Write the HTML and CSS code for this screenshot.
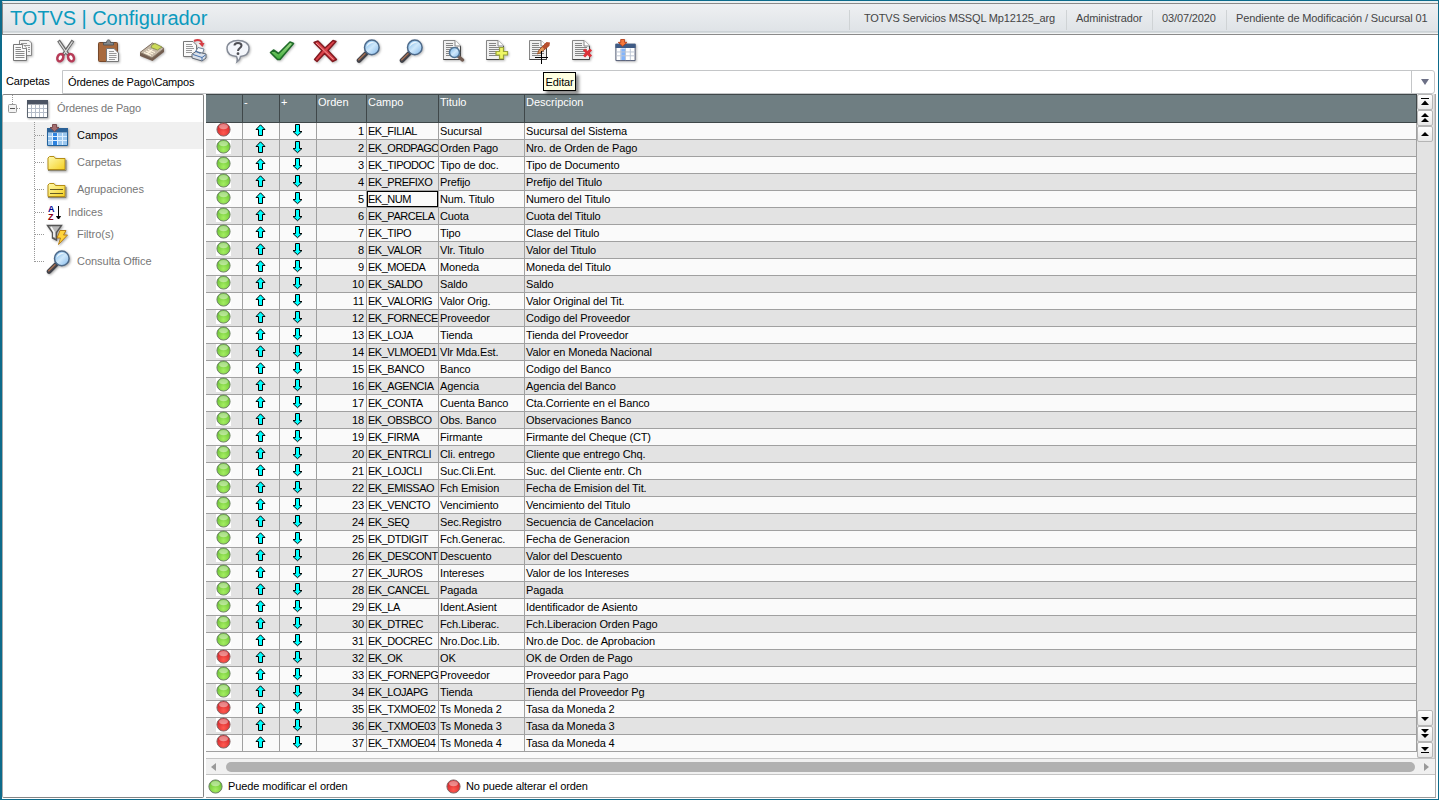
FILE: index.html
```html
<!DOCTYPE html>
<html lang="es">
<head>
<meta charset="utf-8">
<title>TOTVS | Configurador</title>
<link rel="stylesheet" href="styles.css">
</head>
<body>
<svg class="defs" width="0" height="0">
  <defs>
    <linearGradient id="lens" x1="0" y1="0" x2="1" y2="1"><stop offset="0" stop-color="#6fb0e6"/><stop offset=".5" stop-color="#cfe8fb"/><stop offset="1" stop-color="#7fb6ea"/></linearGradient>
    <linearGradient id="fold" x1="0" y1="0" x2="1" y2="1"><stop offset="0" stop-color="#fffbb0"/><stop offset="1" stop-color="#f4cf20"/></linearGradient>
    <radialGradient id="gr" cx=".5" cy=".75" r=".7"><stop offset="0" stop-color="#a5ee62"/><stop offset="1" stop-color="#66c02e"/></radialGradient>
    <radialGradient id="rd" cx=".5" cy=".75" r=".7"><stop offset="0" stop-color="#ff5a50"/><stop offset="1" stop-color="#cf2026"/></radialGradient>
    <linearGradient id="chk" x1="0" y1="0" x2="0" y2="1"><stop offset="0" stop-color="#a5dc8c"/><stop offset="1" stop-color="#3fae3c"/></linearGradient>
    <symbol id="green" viewBox="0 0 15 15"><circle cx="7.5" cy="7.5" r="6.600" fill="url(#gr)" stroke="#6f806a"/><ellipse cx="7.5" cy="4.600" rx="4.400" ry="2.600" fill="#fff" opacity=".42"/></symbol>
    <symbol id="red" viewBox="0 0 15 15"><circle cx="7.5" cy="7.5" r="6.600" fill="url(#rd)" stroke="#806a6a"/><ellipse cx="7.5" cy="4.600" rx="4.400" ry="2.600" fill="#fff" opacity=".42"/></symbol>
    <symbol id="up" viewBox="0 0 11 13"><path d="M5.500 .8 1 5.500H3.500V11.500H7.500V5.500H10Z" fill="#0ff" stroke="#000"/></symbol>
    <symbol id="down" viewBox="0 0 11 13"><path d="M5.500 11.700 1 7.500H3.500V.5H7.500V7.500H10Z" fill="#0ff" stroke="#000"/></symbol>
    <symbol id="mag" viewBox="0 0 24 24"><path d="M3 21.500 10 14.500" stroke="#42434a" stroke-width="4.600" stroke-linecap="round"/><path d="M2.800 20.800 9 14.800" stroke="#a36f54" stroke-width="1.600" stroke-linecap="round"/><circle cx="15.800" cy="8.400" r="7.300" fill="url(#lens)" stroke="#4d6989" stroke-width="1.500"/><path d="M10.500 8a5.500 5.500 0 0 1 8-4.700C15 4 12.500 5.500 10.500 8Z" fill="#fff" opacity=".75"/></symbol>
    <symbol id="page" viewBox="0 0 24 24"><path d="M1.500 1.500H13L18.500 7V20.500H1.500Z" fill="#f0f0f0" stroke="#858585"/><path d="M18.500 7V20.500H1.500" fill="none" stroke="#444"/><path d="M13 1.500V7H18.500" fill="#fff" stroke="#858585"/><path d="M4 4.500H11M4 6.500H11M4 8.500H16M4 10.500H16M4 12.500H16M4 14.500H16M4 16.500H14" stroke="#858585"/></symbol>
    <symbol id="grid" viewBox="0 0 24 22"><path d="M1.500 2.500H21.500V19.500H1.500Z" fill="#fff" stroke="#5c6570"/><path d="M1 2H22V6.500H1Z" fill="#4c5463"/><path d="M5.500 7V19M9.500 7V19M13.500 7V19M17.500 7V19M2 10.500H21M2 14.500H21" stroke="#b5bdc9"/></symbol>
    <symbol id="fields" viewBox="0 0 24 25"><path d="M1.500 5.500H21.500V22.500H1.500Z" fill="#fff" stroke="#4b5570"/><path d="M1 5H22V9.500H1Z" fill="#3f5b85"/><path d="M7 10H12V22H7Z" fill="#82b4fb"/><path d="M6.500 10V22M11.500 10V22M16.500 10V22M2 13.500H21M2 17.500H21" stroke="#bcc5d4"/><path d="M6.500 .5H10.500V3.500H13L8.500 7.500 4 3.500H6.500Z" fill="#f6793b" stroke="#b9451f"/></symbol>
    <symbol id="fields-on" viewBox="0 0 24 25"><path d="M1.500 5.500H21.500V22.500H1.500Z" fill="#d1e3f3" stroke="#23639d"/><path d="M1 5H22V9.500H1Z" fill="#2b6197"/><path d="M2 10H6V22H2ZM12 10H21V22H12Z" fill="#9cc7ee"/><path d="M7 10H12V22H7Z" fill="#2e83df"/><path d="M6.500 10V22M11.500 10V22M16.500 10V22M2 13.500H21M2 17.500H21" stroke="#deefff"/><path d="M6.500 1.500H10.500V4.500H13L8.500 8.500 4 4.500H6.500Z" fill="#a56f70" stroke="#7c4d50"/></symbol>
    <symbol id="folder" viewBox="0 0 22 20"><path d="M2 16.500V5L3.500 3.500H8L9.500 5.500H19V16.500Z" fill="url(#fold)" stroke="#b58d14"/><path d="M2 17.500H20V7" fill="none" stroke="#8c856d"/></symbol>
  </defs>
</svg>
<div class="window">
  <header class="titlebar">
    <h1 class="title">TOTVS | Configurador</h1>
    <div class="session">
      <span class="info server">TOTVS Servicios MSSQL Mp12125_arg</span>
      <span class="info user">Administrador</span>
      <span class="info date">03/07/2020</span>
      <span class="info branch">Pendiente de Modificación / Sucursal 01</span>
    </div>
  </header>
  <nav class="toolbar">
    <svg class="tool" viewBox="0 0 24 24"><path d="M8.500 1.500H18L20.500 4V16.500H8.500Z" fill="#f5f5f5" stroke="#888"/><path d="M10 4.500H16M10 6.500H19M17 8.500H19M17 10.500H19M17 12.500H19" stroke="#999"/><path d="M2.500 5.500H12L15.500 9V21.500H2.500Z" fill="#fafafa" stroke="#777"/><path d="M11.500 5.500V9.500H15.500" fill="#fff" stroke="#888"/><path d="M4.500 8.500H10M4.500 10.500H10M4.500 12.500H13.500M4.500 14.500H13.500M4.500 16.500H13.500M4.500 18.500H13.500" stroke="#8a8a8a"/></svg>
    <svg class="tool" viewBox="0 0 24 24"><path d="M4.500 1.500 14.500 16M19 1.500 9 16" stroke="#666" stroke-width="3.200"/><path d="M5 2.500 13.500 15M18.500 2.500 10 15" stroke="#ddd" stroke-width="1.300"/><ellipse cx="6.300" cy="18.700" rx="2.800" ry="3.800" transform="rotate(25 6.300 18.700)" fill="#fff" stroke="#b73b57" stroke-width="2.500"/><ellipse cx="17" cy="18.700" rx="2.800" ry="3.800" transform="rotate(-25 17 18.700)" fill="#fff" stroke="#b73b57" stroke-width="2.500"/></svg>
    <svg class="tool" viewBox="0 0 24 24"><rect x="1.500" y="3.500" width="19" height="19" rx="1" fill="#a86a3e" stroke="#76482a"/><path d="M6.500 6V3.500H9.500C9.500 0 13.500 0 13.500 3.500H16.500V6Z" fill="#83888b" stroke="#54585b"/><path d="M9.500 9.500H17L21.500 14V22.500H9.500Z" fill="#f8f8f8" stroke="#777"/><path d="M12 12.500H17M12 14.500H19.500M12 16.500H19.500M12 18.500H19.500M12 20.500H18" stroke="#999"/></svg>
    <svg class="tool wide" viewBox="0 0 26 24"><path d="M1 14 13.500 4 25 9.500V13L13.500 22 1 17Z" fill="#735e50"/><path d="M1 13.500 13.500 4 25 9.500 13 19Z" fill="#c5b8a7" stroke="#827263"/><path d="M13 6 16 4.500 23 8 18.500 11 12 8.500Z" fill="#cddb57" stroke="#8f9950"/><path d="M5 13.500 12 16.500M7 12 14 15M9 10.500 16 13.500M8 15 13.500 10.500" stroke="#fff5df" stroke-width="1.200"/></svg>
    <svg class="tool wide" viewBox="0 0 26 24"><path d="M1.500 2.500H11L14.500 6V17.500H1.500Z" fill="#fafafa" stroke="#777"/><path d="M4 5.500H10M4 7.500H11M4 9.500H12M4 11.500H10M4 13.500H10" stroke="#999"/><path d="M12 2C17-.5 20 2 20 5" fill="none" stroke="#d63c43" stroke-width="2"/><path d="M16.500 4H22.500L20.500 8Z" fill="#d63c43"/><path d="M13 14 16 8.500 22 10 20 16Z" fill="#f9fcff" stroke="#72839a"/><path d="M10 15 14 12.500 24 15V19L20 22 10 19Z" fill="#dae0e8" stroke="#5e6671"/><path d="M11 15.500 20 18.500 23.500 16M20 18.500V21.500M13 12 18.500 14.500" stroke="#4472ae" fill="none"/></svg>
    <svg class="tool wide" viewBox="0 0 26 24"><path d="M13 1.500C19.500 1.500 24 4.500 24 9.500S20 17 15.500 17.500Q15 21 12 23 13 20 11.500 17.500C6 17 2 14.500 2 9.500S6.500 1.500 13 1.500Z" fill="#f4f6fb" stroke="#858b97" stroke-width="1.500"/><path d="M9.500 6.500C9.500 3 16.500 3 16.500 6.500 16.500 9 13 9 13 12" fill="none" stroke="#4e4e54" stroke-width="2"/><circle cx="13" cy="14.700" r="1.400" fill="#4e4e54"/></svg>
    <svg class="tool wide" viewBox="0 0 26 24"><path d="M1.500 13.500 4.500 11 9.500 14.500 21 3 24.500 4.500 11 20.500 8.500 20.500Z" fill="url(#chk)" stroke="#1e6b29" stroke-width="1.600" stroke-linejoin="round"/></svg>
    <svg class="tool wide" viewBox="0 0 26 24"><path d="M2 3.500 6 2 13 9 21 1.500 24 2.500 16 11.500 24.500 20.500 20.500 22.500 12.500 14.500 5 22.500 2.500 20.500 10 11.500Z" fill="#da4149" stroke="#80191f" stroke-width="1.400" stroke-linejoin="round"/><path d="M4 4 12.500 12 21.500 20.500" stroke="#f29a9a" fill="none"/></svg>
    <svg class="tool"><use href="#mag"/></svg>
    <svg class="tool"><use href="#mag"/></svg>
    <svg class="tool" viewBox="0 0 24 24"><use href="#page" width="24" height="24"/><path d="M16.500 17.500 20.500 21" stroke="#735d53" stroke-width="3.400" stroke-linecap="round"/><circle cx="12.500" cy="13.500" r="5" fill="url(#lens)" stroke="#4f7293" stroke-width="1.500"/></svg>
    <svg class="tool" viewBox="0 0 24 24"><use href="#page" width="24" height="24"/><path d="M14.500 8.500H18.500V12.500H22.500V16H18.500V20H14.500V16H11V12.500H14.500Z" fill="#eff765" stroke="#98a23a" stroke-width="1.200"/></svg>
    <div class="tool editing">
      <svg viewBox="0 0 24 24"><use href="#page" width="24" height="24"/><path d="M11 11 17.500 4.500 20.500 7 13 13.500 9.500 15Z" fill="#e29a5c" stroke="#9b552f"/><path d="M14 8 18.500 3 22 3.500 21.500 6.500 17 10.500Z" fill="#b8502f"/></svg>
      <svg class="cursor" viewBox="0 0 13 13"><path d="M6.500 0V13M0 6.500H13" stroke="#000"/></svg>
      <span class="tooltip">Editar</span>
    </div>
    <svg class="tool" viewBox="0 0 24 24"><use href="#page" width="24" height="24"/><path d="M13 10.500 20 17.500M20 10.500 13 17.500" stroke="#dd3038" stroke-width="3"/></svg>
    <svg class="tool" viewBox="0 0 24 25"><use href="#fields" width="24" height="25"/></svg>
  </nav>
  <div class="path">
    <label class="path-label">Carpetas</label>
    <div class="combo"><span class="combo-text">Órdenes de Pago\Campos</span><span class="combo-btn"><svg width="8" height="6"><path d="M0 0H8L4 6Z" fill="#6c7086"/></svg></span></div>
  </div>
  <main class="content">
    <aside class="tree">
      <div class="node root"><svg class="toggle" viewBox="0 0 18 27"><path d="M9.500 0V9M14 13.500H18" stroke="#999" stroke-dasharray="1 1"/><rect x="5.500" y="9.500" width="8" height="8" rx="1" fill="#f3f3f3" stroke="#999"/><path d="M7 13.500H12" stroke="#555"/></svg><svg class="icon" viewBox="0 0 24 22"><use href="#grid" width="24" height="22"/></svg><span>Órdenes de Pago</span></div>
      <div class="node child selected"><i class="branch-line"></i><svg class="icon tall"><use href="#fields-on"/></svg><span>Campos</span></div>
      <div class="node child"><i class="branch-line"></i><svg class="icon folder"><use href="#folder"/></svg><span>Carpetas</span></div>
      <div class="node child"><i class="branch-line"></i><svg class="icon folder" viewBox="0 0 22 20"><use href="#folder" width="22" height="20"/><path d="M4 9.500H17M4 13.500H17" stroke="#665b22"/></svg><span>Agrupaciones</span></div>
      <div class="node child short"><i class="branch-line"></i><span class="sort"><b class="az"><span class="a">A</span><span class="z">Z</span></b><svg width="5" height="14"><path d="M2.500 0V13M.5 10.500H4.500L2.500 13Z" fill="#000" stroke="#000"/></svg></span><span>Indices</span></div>
      <div class="node child filter"><i class="branch-line"></i><svg class="icon" viewBox="0 0 24 22"><path d="M1.500 1.500H15.500L10.500 8.500V16L6.500 14V8.500Z" fill="#b8b8b8" stroke="#555" stroke-width="1.400"/><path d="M5 3 8 8V13" fill="none" stroke="#f7f7f7" stroke-width="1.600"/><path d="M14 6.500H20L17.500 11H21.500L12.500 20.500 14.500 14H11Z" fill="#ffd43b" stroke="#b57d18"/></svg><span>Filtro(s)</span></div>
      <div class="node child last"><i class="branch-line"></i><svg class="icon mag"><use href="#mag"/></svg><span>Consulta Office</span></div>
    </aside>
    <section class="browse">
      <div class="sheet">
        <table class="records">
          <colgroup><col class="c-state"><col class="c-up"><col class="c-down"><col class="c-order"><col class="c-field"><col class="c-title"><col></colgroup>
          <thead><tr><th></th><th>-</th><th>+</th><th>Orden</th><th>Campo</th><th>Titulo</th><th>Descripcion</th></tr></thead>
          <tbody id="rows"></tbody>
        </table>
        <div class="vbar">
          <div class="group">
            <span class="key"><svg width="8" height="8"><path d="M0 0H8V1H0ZM4 2.500 8 7H0Z"/></svg></span>
            <span class="key"><svg width="8" height="10"><path d="M4 0 8 4H0ZM4 5 8 9H0Z"/></svg></span>
            <span class="key"><svg width="8" height="5"><path d="M4 0 8 4H0Z"/></svg></span>
          </div>
          <div class="group">
            <span class="key"><svg width="8" height="5"><path d="M4 5 0 1H8Z"/></svg></span>
            <span class="key"><svg width="8" height="10"><path d="M4 4 0 0H8ZM4 9 0 5H8Z"/></svg></span>
            <span class="key"><svg width="8" height="8"><path d="M4 5 0 1H8ZM0 6H8V7H0Z"/></svg></span>
          </div>
        </div>
      </div>
      <div class="hbar"><svg width="5" height="8"><path d="M5 0V8L0 4Z" fill="#999"/></svg><span class="thumb"></span><svg width="5" height="8"><path d="M0 0V8L5 4Z" fill="#999"/></svg></div>
      <footer class="legend">
        <span class="legend-item"><svg class="ball"><use href="#green"/></svg>Puede modificar el orden</span>
        <span class="legend-item"><svg class="ball"><use href="#red"/></svg>No puede alterar el orden</span>
      </footer>
    </section>
  </main>
</div>
<script src="rows.js"></script>
</body>
</html>
```

FILE: styles.css
```css
* { box-sizing: border-box; }
body { margin: 0; font: 11px/13px "Liberation Sans", Arial, sans-serif; letter-spacing: -0.12px; color: #000; }
svg { display: block; overflow: visible; flex: none; }
.defs { position: absolute; }
.window { width: 1439px; height: 800px; background: #fff; border: solid #0d6b8b; border-width: 1px 1px 1px 2px; display: flex; flex-direction: column; overflow: hidden; }

.titlebar { height: 34px; border-top: 2px solid #e8f0f2; border-bottom: 1px solid #8a8a8a; display: flex; justify-content: space-between; flex: none; background: linear-gradient(#8a8a8a 0 1px, #eef0f2 1px, #dfe3e7 28px, #b9c2c6 29px, #f2f4f5 30px); border-left: 1px solid #8a8a8a; }
.title { margin: 1px 0 0 7px; font-size: 20px; line-height: 29px; font-weight: normal; letter-spacing: -0.05px; color: #0c9abe; white-space: nowrap; }
.session { display: flex; padding-top: 7px; color: #454545; }
.info { height: 20px; line-height: 17px; border-left: 1px solid #cfd3d5; white-space: nowrap; }
.server { width: 217px; padding-left: 14px; letter-spacing: -0.16px; }
.user { width: 86px; padding-left: 9px; }
.date { width: 74px; padding-left: 9px; }
.branch { width: 212px; padding-left: 9px; }

.toolbar { height: 35px; flex: none; padding: 4px 0 0 9px; display: flex; gap: 19.1px; }
.tool { width: 24px; height: 24px; filter: drop-shadow(1px 1px 1px #0004); }
.tool.wide { width: 26px; margin: 0 -1px; }
.editing { position: relative; filter: none; flex: none; }
.cursor { position: absolute; left: 7px; top: 12px; width: 13px; height: 13px; }
.tooltip { position: absolute; z-index: 2; left: 15px; top: 33px; width: 33px; height: 19px; border: 1px solid #000; background: #ffffe1; line-height: 18px; text-align: center; box-shadow: 3px 3px 3px #0007; }

.path { height: 24px; flex: none; display: flex; }
.path-label { width: 60px; padding-left: 4px; line-height: 23px; }
.combo { width: 1373px; border: 1px solid #c4c6c8; border-radius: 0 3px 3px 0; display: flex; justify-content: space-between; }
.combo-text { padding-left: 5px; line-height: 22px; letter-spacing: -0.18px; }
.combo-btn { width: 23px; border-left: 1px solid #c4c6c8; display: flex; align-items: center; justify-content: center; padding-left: 3px; }

.content { flex: 1; min-height: 0; display: flex; padding-bottom: 1px; }
.tree { width: 202px; margin-right: 2px; border: 1px solid #858585; border-left-color: #aaa; border-radius: 2px; color: #777; letter-spacing: -0.03px; flex: none; }
.node { height: 27px; display: flex; align-items: center; white-space: nowrap; }
.toggle { width: 18px; height: 27px; margin-right: 5px; }
.icon { width: 24px; height: 22px; margin-right: 7px; filter: drop-shadow(1px 1px 1px #0005); }
.root { letter-spacing: -0.15px; }
.child { padding-left: 31px; }
.branch-line { align-self: stretch; width: 10px; margin-right: 2px; flex: none; border-left: 1px dotted #999; background: repeating-linear-gradient(90deg, #999 0 1px, transparent 1px 2px) 0 50% / 9px 1px no-repeat; }
.last .branch-line { height: 14px; align-self: flex-start; background-position: 0 100%; }
.selected { background: #f0f0f0; color: #000; }
.icon.tall { height: 25px; }
.icon.folder { width: 22px; height: 20px; margin-right: 9px; }
.icon.mag { height: 24px; }
.short { height: 19px; }
.filter { height: 26px; padding-bottom: 1px; }
.sort { display: flex; align-items: center; width: 17px; margin: 0 3px 0 2px; gap: 2px; }
.az { font-size: 9px; line-height: 8px; display: flex; flex-direction: column; }
.a { color: #00008b; }
.z { color: #8b0010; }

.browse { width: 1230px; display: flex; flex-direction: column; border-bottom: 1px solid #999; border-right: 1px solid #aaa; }
.sheet { height: 664px; flex: none; display: flex; background: #fafafa; }
.records { width: 1211px; height: 658px; table-layout: fixed; border-collapse: separate; border-spacing: 0; flex: none; align-self: flex-start; }
.c-state, .c-up, .c-down { width: 37px; }
.c-order { width: 50px; }
.c-field { width: 72px; }
.c-title { width: 86px; }
th { height: 29px; padding: 1px 0 0 1px; text-align: left; vertical-align: top; font-weight: normal; letter-spacing: 0; color: #fff; background: #6f7e82; border: solid #3f4749; border-width: 1px 1px 1px 0; }
td { height: 17px; padding: 0 0 0 1px; border: solid #a0a0a0; border-width: 0 1px 1px 0; white-space: nowrap; overflow: hidden; line-height: 16px; background: #fafafa; }
tbody tr:nth-child(even) td { background: #e3e3e3; }
td.num { text-align: right; padding-right: 2px; }
td.field { letter-spacing: -0.48px; }
td.focus { box-shadow: inset 0 0 0 1px #000; }
td.pic { padding: 0; vertical-align: top; overflow: visible; }
.ball { width: 15px; height: 15px; }
td .ball { margin: -1px 0 0 10px; height: 15px; margin-bottom: -2px; background: linear-gradient(#fff, #fff) 0 1px no-repeat; }
.move { width: 11px; height: 13px; margin: 1px 0 0 12px; }

.vbar { width: 18px; background: #e3e3e3; display: flex; flex-direction: column; justify-content: space-between; border-right: 1px solid #ccc; }
.group { display: flex; flex-direction: column; }
.key { width: 16px; height: 16px; border: 1px solid #b5b5b5; border-radius: 2px; background: linear-gradient(#fff, #e8e8e8); display: flex; align-items: center; justify-content: center; }
.hbar { height: 17px; flex: none; border: solid #c4c4c4; border-width: 1px 0; background: #f0f0f0; display: flex; align-items: center; justify-content: space-between; padding: 0 6px 0 5px; }
.thumb { width: 1189px; height: 10px; border-radius: 5px; background: #b1b1b1; }
.legend { flex: 1; display: flex; align-items: center; padding-left: 2px; }
.legend-item { width: 238px; display: flex; align-items: center; gap: 5px; }
```

FILE: rows.js
```js
const fields = `FILIAL|Sucursal|Sucursal del Sistema
ORDPAGO|Orden Pago|Nro. de Orden de Pago
TIPODOC|Tipo de doc.|Tipo de Documento
PREFIXO|Prefijo|Prefijo del Titulo
NUM|Num. Titulo|Numero del Titulo
PARCELA|Cuota|Cuota del Titulo
TIPO|Tipo|Clase del Titulo
VALOR|Vlr. Titulo|Valor del Titulo
MOEDA|Moneda|Moneda del Titulo
SALDO|Saldo|Saldo
VALORIG|Valor Orig.|Valor Original del Tit.
FORNECE|Proveedor|Codigo del Proveedor
LOJA|Tienda|Tienda del Proveedor
VLMOED1|Vlr Mda.Est.|Valor en Moneda Nacional
BANCO|Banco|Codigo del Banco
AGENCIA|Agencia|Agencia del Banco
CONTA|Cuenta Banco|Cta.Corriente en el Banco
OBSBCO|Obs. Banco|Observaciones Banco
FIRMA|Firmante|Firmante del Cheque (CT)
ENTRCLI|Cli. entrego|Cliente que entrego Chq.
LOJCLI|Suc.Cli.Ent.|Suc. del Cliente entr. Ch
EMISSAO|Fch Emision|Fecha de Emision del Tit.
VENCTO|Vencimiento|Vencimiento del Titulo
SEQ|Sec.Registro|Secuencia de Cancelacion
DTDIGIT|Fch.Generac.|Fecha de Generacion
DESCONT|Descuento|Valor del Descuento
JUROS|Intereses|Valor de los Intereses
CANCEL|Pagada|Pagada
LA|Ident.Asient|Identificador de Asiento
DTREC|Fch.Liberac.|Fch.Liberacion Orden Pago
DOCREC|Nro.Doc.Lib.|Nro.de Doc. de Aprobacion
OK|OK|OK de Orden de Pago
FORNEPG|Proveedor|Proveedor para Pago
LOJAPG|Tienda|Tienda del Proveedor Pg
TXMOE02|Ts Moneda 2|Tasa da Moneda 2
TXMOE03|Ts Moneda 3|Tasa da Moneda 3
TXMOE04|Ts Moneda 4|Tasa da Moneda 4`.split("\n").map(line => line.split("|"));

const locked = new Set([1, 32, 35, 36, 37]);

document.getElementById("rows").innerHTML = fields.map(([name, title, text], i) => {
  const n = i + 1;
  return `<tr>
    <td class="pic"><svg class="ball"><use href="#${locked.has(n) ? "red" : "green"}"/></svg></td>
    <td class="pic"><svg class="move"><use href="#up"/></svg></td>
    <td class="pic"><svg class="move"><use href="#down"/></svg></td>
    <td class="num">${n}</td>
    <td class="field${n === 5 ? " focus" : ""}">EK_${name}</td>
    <td>${title}</td>
    <td>${text}</td>
  </tr>`;
}).join("");
```
